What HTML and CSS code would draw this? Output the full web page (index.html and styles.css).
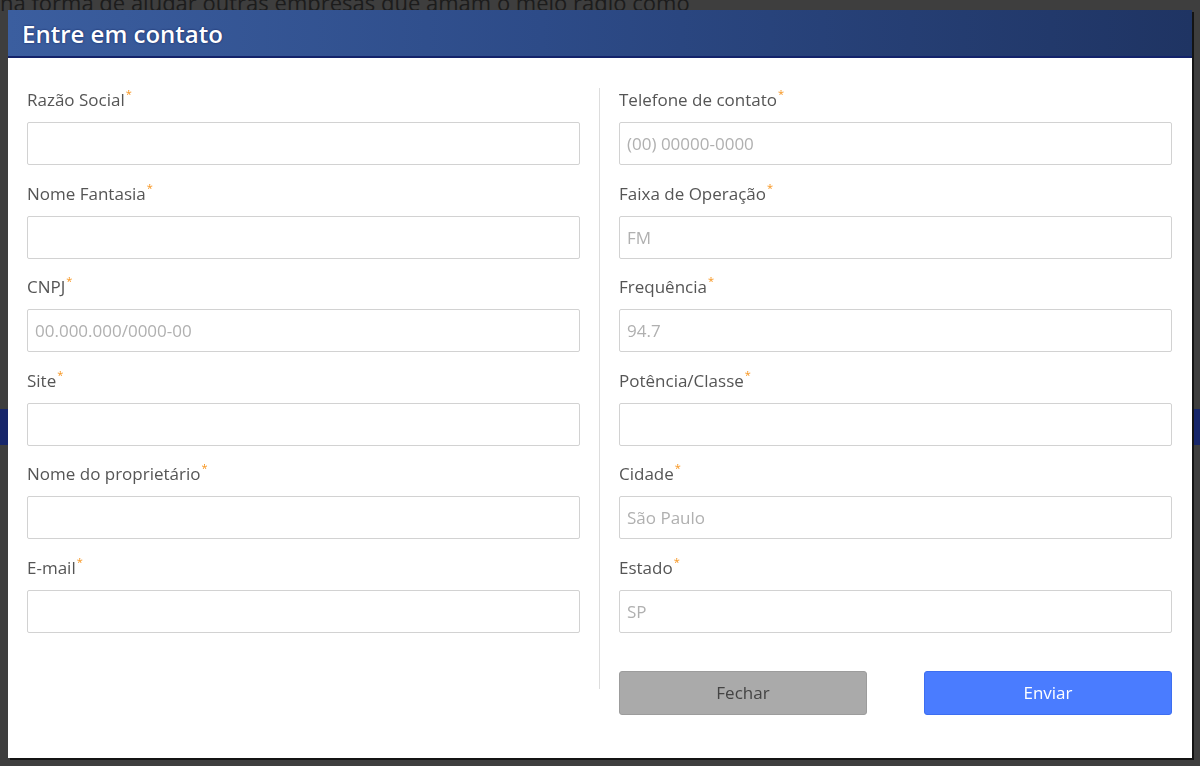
FILE: index.html
```html
<!DOCTYPE html>
<html lang="pt-BR">
<head>
    <meta charset="UTF-8">
    <meta name="viewport" content="width=device-width, initial-scale=1.0">
    <title>Entre em contato</title>
    <link rel="stylesheet" href="styles.css">
</head>
<body>
    <div class="page">
        <p class="page-lead">na forma de ajudar outras empresas que amam o meio rádio como</p>
        <div class="page-band"></div>
    </div>

    <div class="modal">
        <div class="modal-header">Entre em contato</div>
        <form class="modal-body" onsubmit="return false">
            <div class="col">
                <div class="field">
                    <label>Razão Social<span class="req">*</span></label>
                    <input type="text">
                </div>
                <div class="field">
                    <label>Nome Fantasia<span class="req">*</span></label>
                    <input type="text">
                </div>
                <div class="field">
                    <label>CNPJ<span class="req">*</span></label>
                    <input type="text" placeholder="00.000.000/0000-00">
                </div>
                <div class="field">
                    <label>Site<span class="req">*</span></label>
                    <input type="text">
                </div>
                <div class="field">
                    <label>Nome do proprietário<span class="req">*</span></label>
                    <input type="text">
                </div>
                <div class="field">
                    <label>E-mail<span class="req">*</span></label>
                    <input type="email">
                </div>
            </div>

            <div class="divider"></div>

            <div class="col">
                <div class="field">
                    <label>Telefone de contato<span class="req">*</span></label>
                    <input type="text" placeholder="(00) 00000-0000">
                </div>
                <div class="field">
                    <label>Faixa de Operação<span class="req">*</span></label>
                    <input type="text" placeholder="FM">
                </div>
                <div class="field">
                    <label>Frequência<span class="req">*</span></label>
                    <input type="text" placeholder="94.7">
                </div>
                <div class="field">
                    <label>Potência/Classe<span class="req">*</span></label>
                    <input type="text">
                </div>
                <div class="field">
                    <label>Cidade<span class="req">*</span></label>
                    <input type="text" placeholder="São Paulo">
                </div>
                <div class="field">
                    <label>Estado<span class="req">*</span></label>
                    <input type="text" placeholder="SP">
                </div>
                <div class="actions">
                    <button type="button" class="btn btn-close">Fechar</button>
                    <button type="submit" class="btn btn-send">Enviar</button>
                </div>
            </div>
        </form>
    </div>
</body>
</html>
```

FILE: styles.css
```css
html, body {
    margin: 0;
    height: 100%;
    overflow: hidden;
}
body {
    background-color: #3e3e3e;
    font-family: "Open Sans", "Noto Sans", Arial, sans-serif;
}

/* pagina escurecida por tras do modal */
.page-lead {
    margin: -11px 0 0 0;
    color: #1c1c1c;
    font-size: 22px;
    line-height: 26px;
    white-space: nowrap;
}
.page-band {
    height: 36px;
    margin-top: 394px;
    background-color: #17266a;
}

.modal {
    position: fixed;
    left: 8px;
    top: 10px;
    width: 1184px;
    height: 748px;
    background-color: #fff;
    box-shadow: 2px 2px 0 #141414;
    display: flex;
    flex-direction: column;
}

.modal-header {
    height: 46px;
    padding-left: 14px;
    background: linear-gradient(to right, #3b5e9f 0%, #2d4b88 45%, #1f3463 100%);
    border-bottom: 2px solid #13236a;
    color: #fff;
    font-size: 24px;
    font-weight: 600;
    line-height: 48px;
    text-shadow: 0 0 2px #0d1e5a;
}

.modal-body {
    display: grid;
    grid-template-columns: 1fr 1px 1fr;
    column-gap: 19px;
    padding: 30px 20px 0 19px;
}

.divider {
    background-color: #ddd;
    margin-bottom: 26px;
}

.field {
    margin-bottom: 16.6px;
}
.field label {
    display: block;
    height: 24px;
    line-height: 24px;
    color: #555;
    font-size: 17px;
}
.req {
    display: inline-block;
    color: #f7941d;
    font-size: 11px;
    line-height: 11px;
    vertical-align: top;
    margin-left: 1px;
}
.field input {
    display: block;
    box-sizing: border-box;
    width: 100%;
    height: 43px;
    margin-top: 10px;
    padding: 0 7px;
    border: 1px solid #d2d2d2;
    border-radius: 2px;
    font-family: inherit;
    font-size: 17px;
    color: #555;
    background-color: #fff;
}
.field input::placeholder {
    color: #b0b0b0;
}

/* margem colapsa com a do ultimo campo */
.actions {
    display: flex;
    justify-content: space-between;
    margin-top: 38px;
}
.btn {
    width: 248px;
    height: 44px;
    border-radius: 3px;
    font-family: inherit;
    font-size: 17px;
    cursor: pointer;
}
.btn-close {
    background-color: #aaa;
    border: 1px solid #9c9c9c;
    color: #444;
}
.btn-send {
    background-color: #4a7cff;
    border: 1px solid #3d6ef0;
    color: #fff;
}
```
